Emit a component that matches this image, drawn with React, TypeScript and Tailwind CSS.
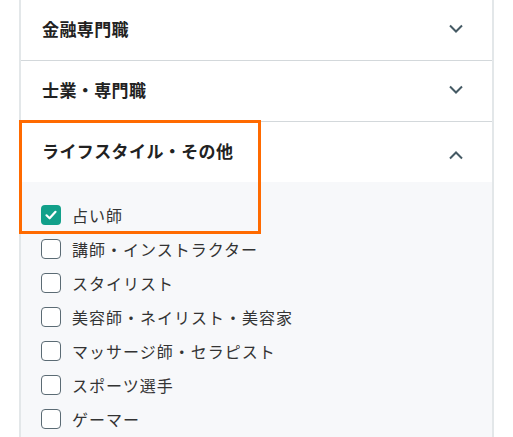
import { useState } from "react";

const FONT = { fontFamily: '"Noto Sans CJK JP", "Noto Sans", sans-serif' };

const CATEGORIES = [
  { title: "金融専門職", items: [] as string[] },
  { title: "士業・専門職", items: [] as string[] },
  {
    title: "ライフスタイル・その他",
    items: [
      "占い師",
      "講師・インストラクター",
      "スタイリスト",
      "美容師・ネイリスト・美容家",
      "マッサージ師・セラピスト",
      "スポーツ選手",
      "ゲーマー",
    ],
  },
];

function Chevron({ up }: { up?: boolean }) {
  return (
    <svg width="16" height="10" viewBox="0 0 16 10" fill="none" className="text-[#455a64]">
      <path
        d={up ? "M2 8.5L8 2.5L14 8.5" : "M2 1.5L8 7.5L14 1.5"}
        stroke="currentColor"
        strokeWidth="2"
      />
    </svg>
  );
}

function Checkbox({ checked }: { checked: boolean }) {
  if (checked) {
    return (
      <span className="flex h-5 w-5 items-center justify-center rounded-[4px] bg-[#12a08a]">
        <svg width="14" height="14" viewBox="0 0 14 14" fill="none">
          <path d="M2.5 7.3L5.6 10.3L11.5 3.8" stroke="white" strokeWidth="2.2" strokeLinecap="round" strokeLinejoin="round" />
        </svg>
      </span>
    );
  }
  return <span className="h-5 w-5 rounded-[4px] border-[1.5px] border-[#5b6b74] bg-white" />;
}

export default function App() {
  const [checked, setChecked] = useState<Record<string, boolean>>({ "占い師": true });

  return (
    <div className="min-h-[437px] bg-white" style={FONT}>
      <div className="relative ml-[19px] w-[475px] border-x-2 border-[#e3e7e9]">
        {CATEGORIES.map((c, i) => {
          const open = c.items.length > 0;
          return (
            <div key={c.title} className={i < CATEGORIES.length - 1 ? "border-b border-[#d3d8db]" : ""}>
              <div className="flex h-[60px] items-center justify-between pl-[21px] pr-[28px]">
                <span className="pb-[3px] text-[17px] font-bold leading-none tracking-[0.4px] text-[#222]">
                  {c.title}
                </span>
                <span className={open ? "pt-1.5" : "pb-0.5"}>
                  <Chevron up={open} />
                </span>
              </div>
              {open && (
                <div className="bg-[#f7f8fa] pb-3 pl-[20px] pt-4">
                  {c.items.map((it) => (
                    <label
                      key={it}
                      className="flex h-[34px] cursor-pointer items-center gap-[11px]"
                      onClick={() => setChecked((s) => ({ ...s, [it]: !s[it] }))}
                    >
                      <Checkbox checked={!!checked[it]} />
                      <span className="text-[16px] tracking-[1px] text-[#333]">{it}</span>
                    </label>
                  ))}
                </div>
              )}
            </div>
          );
        })}

        {/* highlight frame */}
        <div className="pointer-events-none absolute left-[-2px] top-[120px] h-[114px] w-[242px] border-[3px] border-[#ff6a00]" />
      </div>
    </div>
  );
}
